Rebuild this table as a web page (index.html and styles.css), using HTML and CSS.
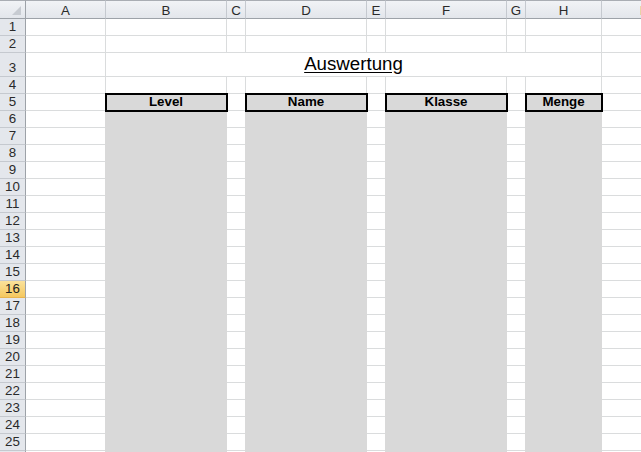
FILE: index.html
```html
<!DOCTYPE html>
<html>
<head>
<meta charset="utf-8">
<link rel="stylesheet" href="styles.css">
</head>
<body>
<div class="sheet">
  <div class="ch corner"><span class="tri"></span></div>
  <div class="ch">A</div><div class="ch">B</div><div class="ch">C</div><div class="ch">D</div><div class="ch">E</div><div class="ch">F</div><div class="ch">G</div><div class="ch">H</div><div class="ch last">I</div>

  <div class="rh">1</div><div class="c"></div><div class="c"></div><div class="c"></div><div class="c"></div><div class="c"></div><div class="c"></div><div class="c"></div><div class="c"></div><div class="c"></div>
  <div class="rh">2</div><div class="c"></div><div class="c"></div><div class="c"></div><div class="c"></div><div class="c"></div><div class="c"></div><div class="c"></div><div class="c"></div><div class="c"></div>
  <div class="rh">3</div><div class="c"></div><div class="c title"><span>Auswertung</span></div><div class="c"></div>
  <div class="rh">4</div><div class="c"></div><div class="c"></div><div class="c"></div><div class="c"></div><div class="c"></div><div class="c"></div><div class="c"></div><div class="c"></div><div class="c"></div>
  <div class="rh">5</div><div class="c"></div><div class="c hd">Level</div><div class="c"></div><div class="c hd">Name</div><div class="c"></div><div class="c hd">Klasse</div><div class="c"></div><div class="c hd">Menge</div><div class="c"></div>

  <div class="rh">6</div><div class="c"></div><div class="c g"></div><div class="c"></div><div class="c g"></div><div class="c"></div><div class="c g"></div><div class="c"></div><div class="c g"></div><div class="c"></div>
  <div class="rh">7</div><div class="c"></div><div class="c g"></div><div class="c"></div><div class="c g"></div><div class="c"></div><div class="c g"></div><div class="c"></div><div class="c g"></div><div class="c"></div>
  <div class="rh">8</div><div class="c"></div><div class="c g"></div><div class="c"></div><div class="c g"></div><div class="c"></div><div class="c g"></div><div class="c"></div><div class="c g"></div><div class="c"></div>
  <div class="rh">9</div><div class="c"></div><div class="c g"></div><div class="c"></div><div class="c g"></div><div class="c"></div><div class="c g"></div><div class="c"></div><div class="c g"></div><div class="c"></div>
  <div class="rh">10</div><div class="c"></div><div class="c g"></div><div class="c"></div><div class="c g"></div><div class="c"></div><div class="c g"></div><div class="c"></div><div class="c g"></div><div class="c"></div>
  <div class="rh">11</div><div class="c"></div><div class="c g"></div><div class="c"></div><div class="c g"></div><div class="c"></div><div class="c g"></div><div class="c"></div><div class="c g"></div><div class="c"></div>
  <div class="rh">12</div><div class="c"></div><div class="c g"></div><div class="c"></div><div class="c g"></div><div class="c"></div><div class="c g"></div><div class="c"></div><div class="c g"></div><div class="c"></div>
  <div class="rh">13</div><div class="c"></div><div class="c g"></div><div class="c"></div><div class="c g"></div><div class="c"></div><div class="c g"></div><div class="c"></div><div class="c g"></div><div class="c"></div>
  <div class="rh">14</div><div class="c"></div><div class="c g"></div><div class="c"></div><div class="c g"></div><div class="c"></div><div class="c g"></div><div class="c"></div><div class="c g"></div><div class="c"></div>
  <div class="rh">15</div><div class="c"></div><div class="c g"></div><div class="c"></div><div class="c g"></div><div class="c"></div><div class="c g"></div><div class="c"></div><div class="c g"></div><div class="c"></div>
  <div class="rh sel">16</div><div class="c"></div><div class="c g"></div><div class="c"></div><div class="c g"></div><div class="c"></div><div class="c g"></div><div class="c"></div><div class="c g"></div><div class="c"></div>
  <div class="rh">17</div><div class="c"></div><div class="c g"></div><div class="c"></div><div class="c g"></div><div class="c"></div><div class="c g"></div><div class="c"></div><div class="c g"></div><div class="c"></div>
  <div class="rh">18</div><div class="c"></div><div class="c g"></div><div class="c"></div><div class="c g"></div><div class="c"></div><div class="c g"></div><div class="c"></div><div class="c g"></div><div class="c"></div>
  <div class="rh">19</div><div class="c"></div><div class="c g"></div><div class="c"></div><div class="c g"></div><div class="c"></div><div class="c g"></div><div class="c"></div><div class="c g"></div><div class="c"></div>
  <div class="rh">20</div><div class="c"></div><div class="c g"></div><div class="c"></div><div class="c g"></div><div class="c"></div><div class="c g"></div><div class="c"></div><div class="c g"></div><div class="c"></div>
  <div class="rh">21</div><div class="c"></div><div class="c g"></div><div class="c"></div><div class="c g"></div><div class="c"></div><div class="c g"></div><div class="c"></div><div class="c g"></div><div class="c"></div>
  <div class="rh">22</div><div class="c"></div><div class="c g"></div><div class="c"></div><div class="c g"></div><div class="c"></div><div class="c g"></div><div class="c"></div><div class="c g"></div><div class="c"></div>
  <div class="rh">23</div><div class="c"></div><div class="c g"></div><div class="c"></div><div class="c g"></div><div class="c"></div><div class="c g"></div><div class="c"></div><div class="c g"></div><div class="c"></div>
  <div class="rh">24</div><div class="c"></div><div class="c g"></div><div class="c"></div><div class="c g"></div><div class="c"></div><div class="c g"></div><div class="c"></div><div class="c g"></div><div class="c"></div>
  <div class="rh">25</div><div class="c"></div><div class="c g"></div><div class="c"></div><div class="c g"></div><div class="c"></div><div class="c g"></div><div class="c"></div><div class="c g"></div><div class="c"></div>
  <div class="rh"></div><div class="c"></div><div class="c g"></div><div class="c"></div><div class="c g"></div><div class="c"></div><div class="c g"></div><div class="c"></div><div class="c g"></div><div class="c"></div>
</div>
</body>
</html>
```
FILE: styles.css
```css
html, body {
  margin: 0;
  padding: 0;
  background: #ffffff;
  overflow: hidden;
}

.sheet {
  display: grid;
  grid-template-columns: 26px 80px 121px 19px 121px 19px 121px 19px 76px 80px;
  grid-template-rows: 19px 17px 17px 24px repeat(23, 17px);
  width: 641px;
  height: 452px;
  overflow: hidden;
  font-family: "Liberation Sans", Arial, sans-serif;
  font-size: 13.33px;
  color: #000;
}

.sheet > div {
  box-sizing: border-box;
}

.ch {
  background: linear-gradient(#f1f3f6, #e3e6eb);
  border-top: 1px solid #a9adb3;
  border-right: 1px solid #c5c9cf;
  border-bottom: 1px solid #9da2a8;
  color: #2a2a2a;
  font-size: 13.33px;
  display: flex;
  align-items: center;
  justify-content: center;
  padding-top: 1px;
}

.ch.corner {
  position: relative;
  border-right-color: #9da2a8;
}

.tri {
  position: absolute;
  right: 4px;
  bottom: 3px;
  width: 0;
  height: 0;
  border-left: 9px solid transparent;
  border-bottom: 9px solid #c7cbd1;
}

.rh {
  background: #e4e7ec;
  border-right: 1px solid #9da2a8;
  border-bottom: 1px solid #c5c9cf;
  color: #2a2a2a;
  font-size: 13.33px;
  display: flex;
  align-items: flex-end;
  justify-content: center;
  padding-bottom: 1px;
  line-height: 14px;
}

.rh.sel {
  background: linear-gradient(#fbe29b, #f5c85f);
  border-bottom-color: #e8b44c;
  color: #222;
}

.c {
  border-right: 1px solid #dadcdd;
  border-bottom: 1px solid #dadcdd;
}

.title {
  grid-column: 3 / 10;
  display: flex;
  align-items: flex-end;
  justify-content: center;
  font-size: 18.7px;
  line-height: 20px;
  padding-bottom: 2px;
}

.title span {
  text-decoration: underline;
  text-underline-offset: 2px;
}

.hd {
  position: relative;
  z-index: 2;
  background: #d9d9d9;
  outline: 2px solid #000;
  outline-offset: -1px;
  font-weight: bold;
  display: flex;
  align-items: flex-end;
  justify-content: center;
  line-height: 14px;
  padding-bottom: 1px;
}

.g {
  background: #d9d9d9;
  border-right-color: #d9d9d9;
  border-bottom-color: #d9d9d9;
  box-shadow: -1px 0 0 #d9d9d9;
}
```
